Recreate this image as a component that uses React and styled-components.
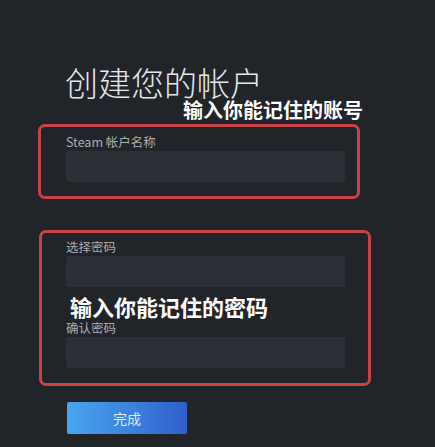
import styled, { createGlobalStyle } from "styled-components";

const GlobalStyle = createGlobalStyle`
  html, body {
    margin: 0;
    padding: 0;
    background: #212429;
  }
  body {
    font-family: "Noto Sans CJK SC", "Noto Sans", sans-serif;
  }
`

const Page = styled.div`
  width: 435px;
  height: 447px;
  padding-top: 65px;
  box-sizing: border-box;
  overflow: hidden;
  display: flex;
  flex-direction: column;
  align-items: flex-start;
`

const Title = styled.h1`
  margin: 0 0 0 65px;
  font-size: 33px;
  font-weight: 300;
  line-height: 34px;
  color: #e4e6e8;
`

const Note = styled.div`
  margin: ${(p) => p.$margin};
  font-size: ${(p) => p.$size}px;
  font-weight: 700;
  line-height: ${(p) => p.$size + 2}px;
  color: #ffffff;
`

const Box = styled.div`
  margin: ${(p) => p.$margin};
  width: ${(p) => p.$width}px;
  box-sizing: border-box;
  border: 3px solid #c84444;
  border-radius: 7px;
  padding: ${(p) => p.$padding};
  display: flex;
  flex-direction: column;
  align-items: flex-start;
`

const Label = styled.label`
  display: block;
  margin-top: ${(p) => p.$top || 0}px;
  font-size: 12.5px;
  line-height: 15px;
  color: #a9acb0;
`

const Field = styled.div`
  margin-top: 2px;
  width: 279px;
  height: 31px;
  background: #2c2f35;
  border-radius: 3px;
`

const Button = styled.button`
  margin: 16px 0 0 67px;
  width: 120px;
  height: 32px;
  border: none;
  border-radius: 2px;
  background: linear-gradient(90deg, #48a6ee 0%, #3a80dc 55%, #2f5ecc 100%);
  color: #dce9f8;
  font-family: inherit;
  font-size: 14px;
  cursor: pointer;
`

const App = () => {
  return (
    <>
      <GlobalStyle />
      <Page>
        <Title>创建您的帐户</Title>
        <Note $size={20} $margin="0 0 0 183px">输入你能记住的账号</Note>

        <Box $width={322} $margin="3px 0 0 38px" $padding="7px 0 14px 25px">
          <Label>Steam 帐户名称</Label>
          <Field />
        </Box>

        <Box $width={332} $margin="31px 0 0 39px" $padding="6px 0 15px 24px">
          <Label>选择密码</Label>
          <Field />
          <Note $size={22} $margin="7px 0 0 4px">输入你能记住的密码</Note>
          <Label $top={2}>确认密码</Label>
          <Field />
        </Box>

        <Button type="button">完成</Button>
      </Page>
    </>
  )
}

export default App
